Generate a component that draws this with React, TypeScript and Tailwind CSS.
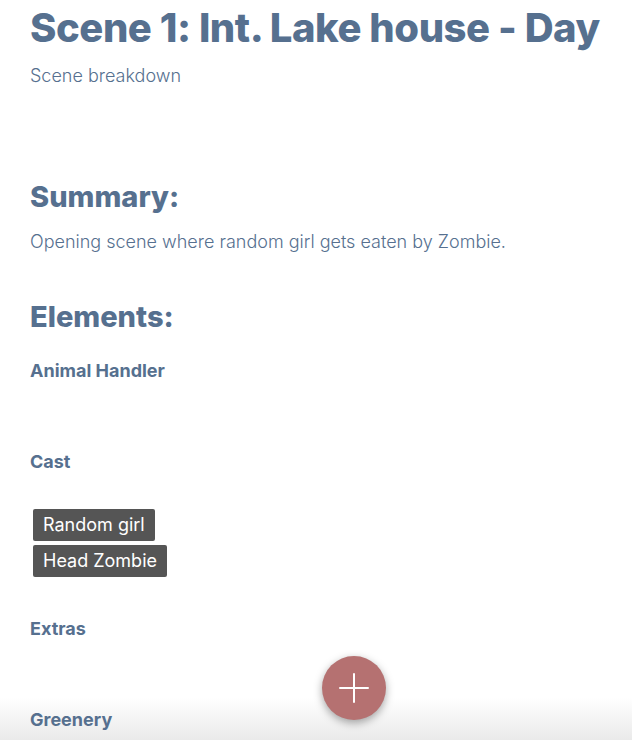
const castMembers = ["Random girl", "Head Zombie"]

function Category({ name, children }: { name: string; children?: React.ReactNode }) {
  return (
    <div className="flex flex-col">
      <h3 className="text-[18px] font-bold leading-[24px] text-[#56708f]">{name}</h3>
      <div className="min-h-[67px] pt-[33px] pb-[34px]">{children}</div>
    </div>
  )
}

export default function App() {
  return (
    <div
      className="relative h-[740px] w-[632px] overflow-hidden bg-[linear-gradient(to_bottom,#ffffff_0px,#ffffff_698px,#eaeaea_740px)]"
      style={{ fontFamily: "Inter, 'Noto Sans', sans-serif" }}
    >
      <div className="flex flex-col px-[30px]">
        <h1 className="mt-[2px] whitespace-nowrap text-[40px] font-extrabold leading-[52px] tracking-[-0.45px] text-[#56708f]">
          Scene 1: Int. Lake house - Day
        </h1>
        <p className="mt-[10px] text-[18px] font-light leading-[24px] text-[#56708f]">Scene breakdown</p>

        <h2 className="mt-[91px] text-[29px] font-extrabold leading-[36px] text-[#56708f]">Summary:</h2>
        <p className="mt-[15px] text-[18px] font-light leading-[24px] text-[#56708f]">
          Opening scene where random girl gets eaten by Zombie.
        </p>

        <h2 className="mt-[45px] text-[29px] font-extrabold leading-[36px] text-[#56708f]">Elements:</h2>

        <div className="mt-[24px] flex flex-col">
          <Category name="Animal Handler" />
          <Category name="Cast">
            <div className="mt-[2px] mb-[6px] flex flex-col items-start gap-[4px] pl-[3px]">
              {castMembers.map((c) => (
                <span
                  key={c}
                  className="block h-[32px] rounded-[2px] bg-[#555555] px-[10px] text-[18px] leading-[32px] text-white"
                >
                  {c}
                </span>
              ))}
            </div>
          </Category>
          <Category name="Extras" />
          <Category name="Greenery" />
        </div>
      </div>

      <button className="absolute bottom-[20px] left-[322px] flex h-[64px] w-[64px] items-center justify-center rounded-full bg-[#b57171] shadow-[0_3px_8px_rgba(0,0,0,0.35)]">
        <svg width="30" height="30" viewBox="0 0 30 30" fill="none" stroke="white" strokeWidth="2" strokeLinecap="round">
          <path d="M15 1v28M1 15h28" />
        </svg>
      </button>
    </div>
  )
}
